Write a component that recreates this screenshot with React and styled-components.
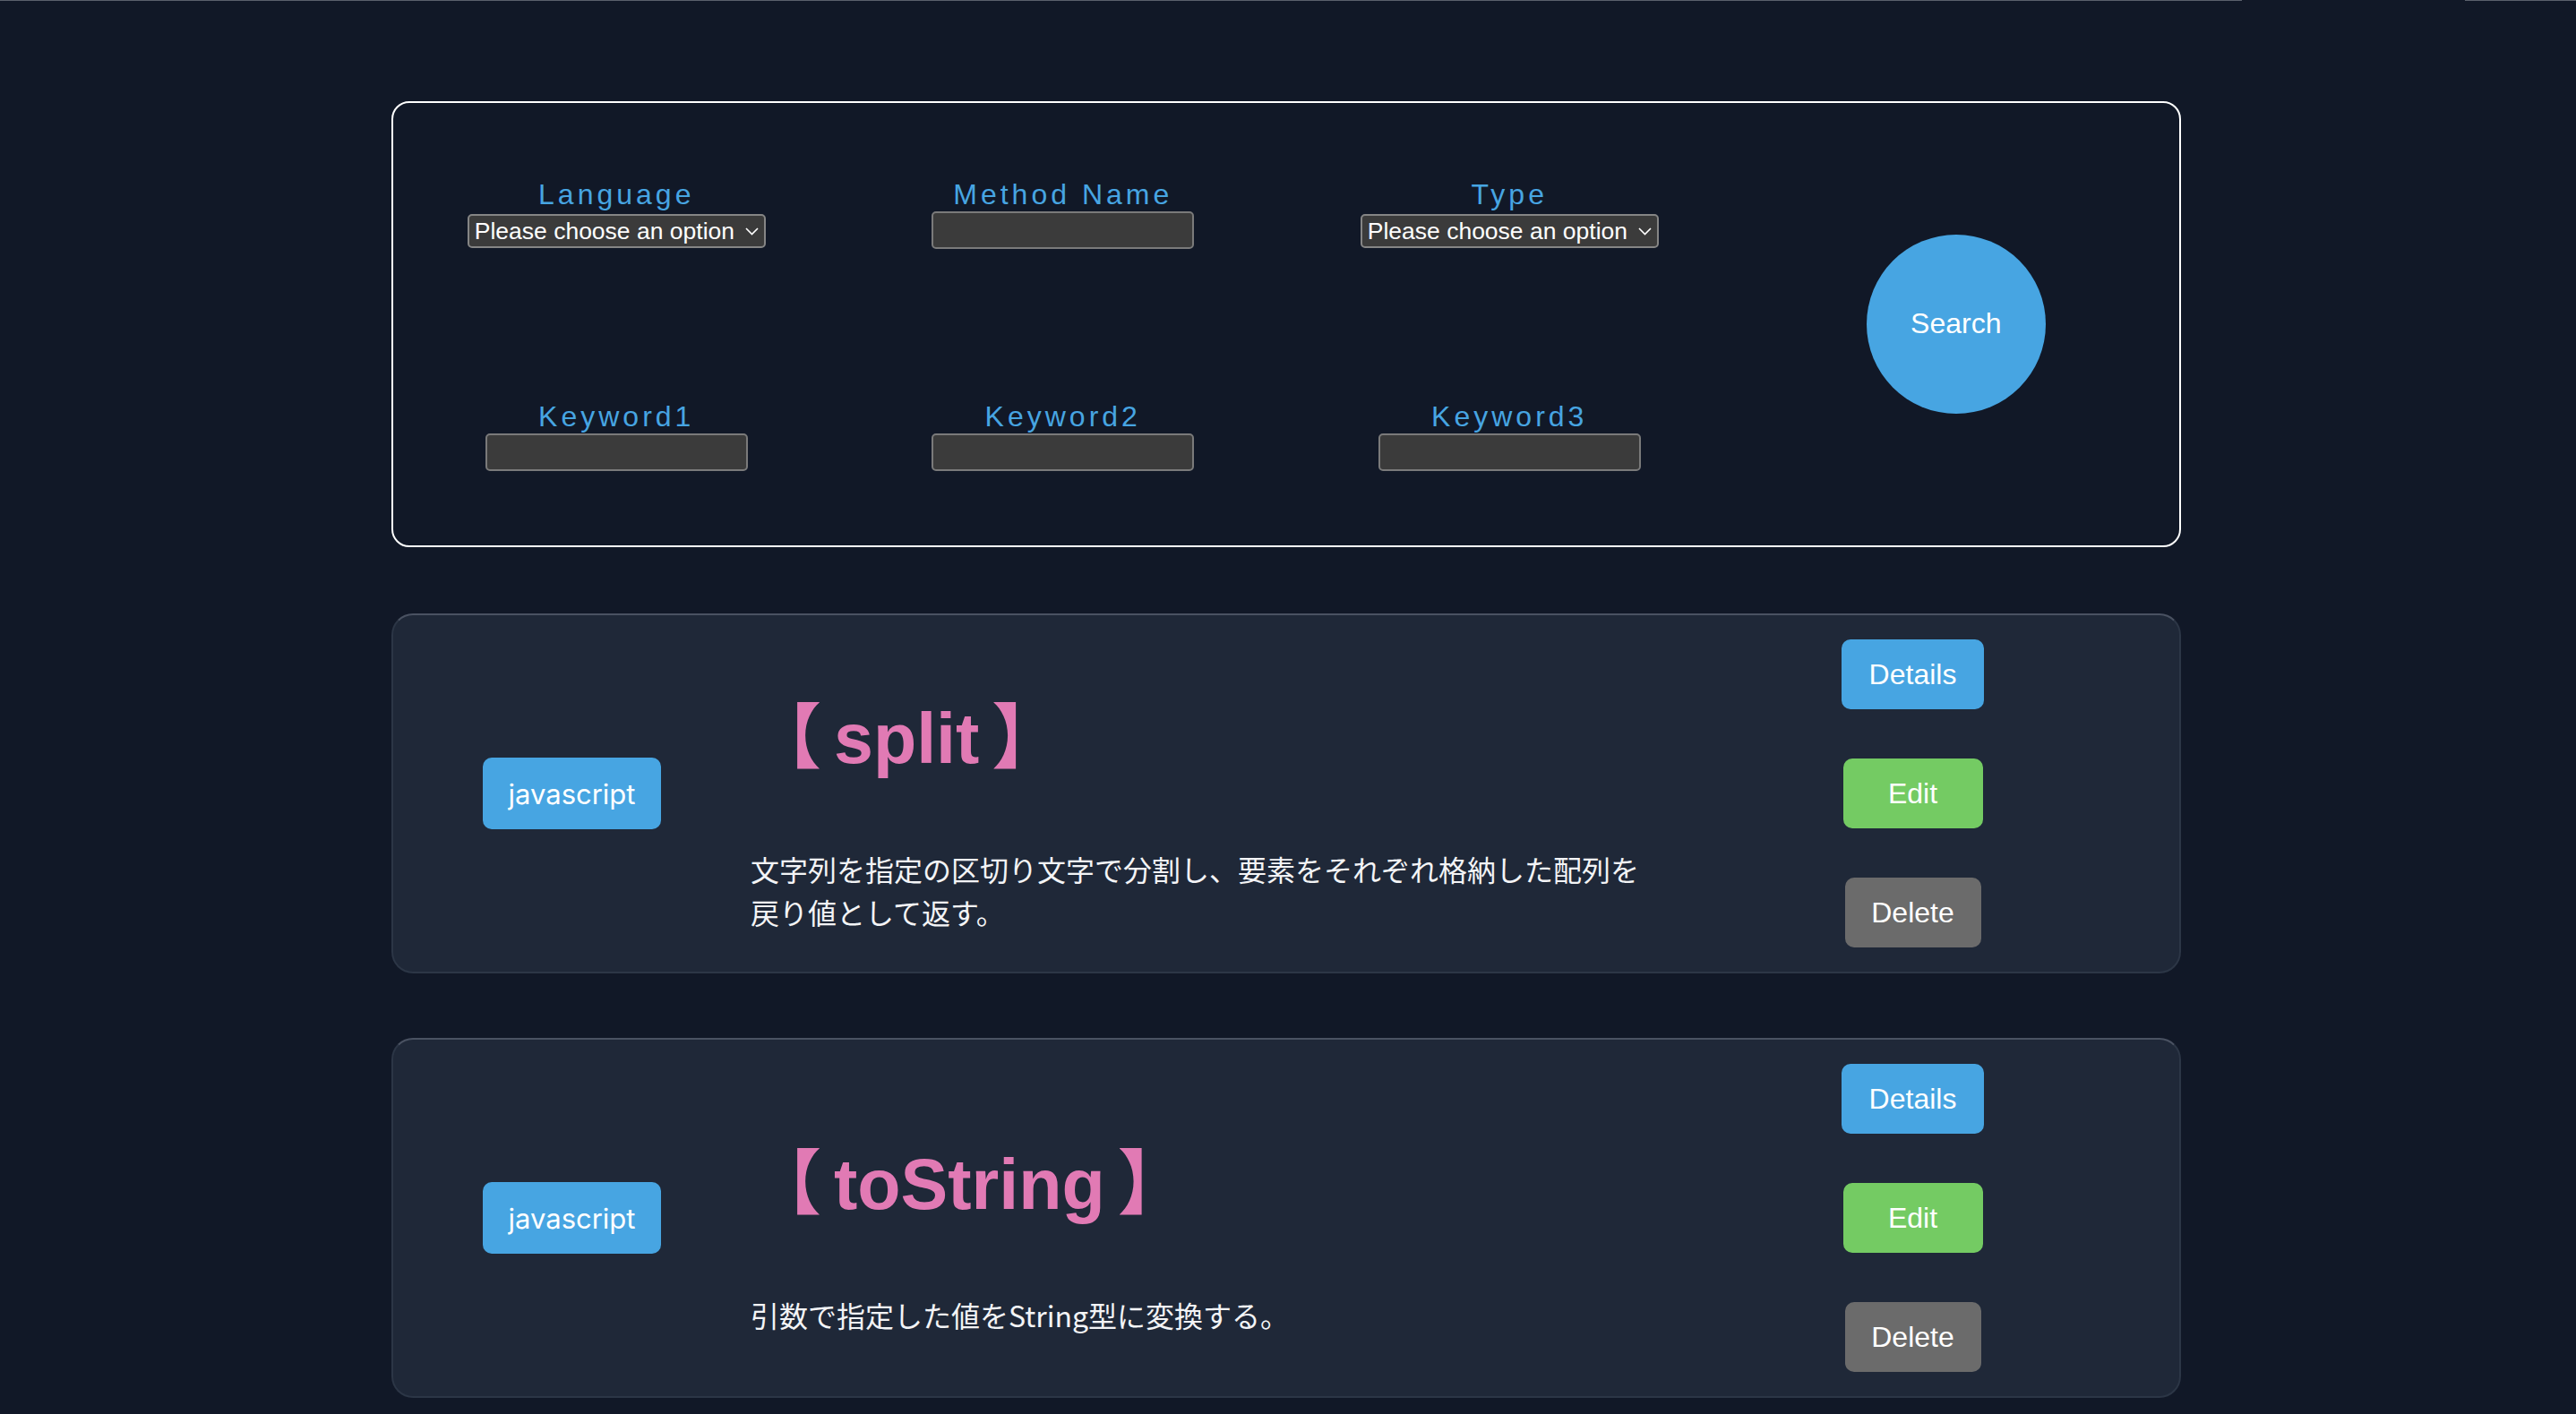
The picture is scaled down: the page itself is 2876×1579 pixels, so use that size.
import React from "react";
import styled, { createGlobalStyle } from "styled-components";

const GlobalStyle = createGlobalStyle`
  html, body {
    margin: 0;
    padding: 0;
    background: #111827;
  }
  body {
    font-family: "Liberation Sans", "Noto Sans CJK JP", sans-serif;
    color: #ffffff;
  }
`;

const TopRule = styled.div`
  display: flex;
  column-gap: 249px;
  height: 1px;
`;

const RuleSegment = styled.div`
  background: #5b606c;
  height: 1px;
  ${(p) => (p.$width ? `width: ${p.$width}px; flex: none;` : "flex: 1;")}
`;

const Page = styled.main`
  width: 1998px;
  margin: 112px 0 0 437px;
  display: flex;
  flex-direction: column;
`;

const SearchPanel = styled.form`
  box-sizing: border-box;
  height: 498px;
  border: 2px solid #ffffff;
  border-radius: 20px;
  padding-top: 86px;
  display: grid;
  grid-template-columns: repeat(4, 1fr);
  grid-template-rows: 248px 160px;
`;

const Field = styled.div`
  display: flex;
  flex-direction: column;
  align-items: center;
`;

const FieldLabel = styled.label`
  font-family: "Liberation Sans", sans-serif;
  font-size: 32px;
  line-height: 32px;
  letter-spacing: 4px;
  color: #47a5e2;
`;

const SelectWrap = styled.div`
  position: relative;
  margin-top: 6px;
  width: 333px;
  height: 38px;
`;

const Select = styled.select`
  appearance: none;
  -webkit-appearance: none;
  box-sizing: border-box;
  width: 100%;
  height: 100%;
  margin: 0;
  padding: 0 30px 0 6px;
  background: #3b3b3b;
  border: 2px solid #858585;
  border-radius: 5px;
  color: #ffffff;
  font-family: "Liberation Sans", sans-serif;
  font-size: 26.5px;
  line-height: 34px;
`;

const Chevron = styled.svg`
  position: absolute;
  right: 8px;
  top: 50%;
  margin-top: -4px;
  width: 15px;
  height: 9px;
  pointer-events: none;
`;

const TextInput = styled.input`
  box-sizing: border-box;
  margin: 3px 0 0;
  width: 293px;
  height: 42px;
  padding: 0 6px;
  background: #3b3b3b;
  border: 2px solid #7a7a7a;
  border-radius: 5px;
  color: #ffffff;
  font-size: 26px;
  outline: none;
`;

const SearchButton = styled.button`
  grid-column: 4;
  grid-row: 1 / span 2;
  justify-self: center;
  align-self: start;
  margin-top: 61px;
  width: 200px;
  height: 200px;
  border: none;
  border-radius: 50%;
  background: #47a5e2;
  color: #ffffff;
  font-family: "Liberation Sans", sans-serif;
  font-size: 32px;
  padding: 0 0 2px;
  cursor: pointer;
`;

const CardList = styled.section`
  margin-top: 74px;
  display: flex;
  flex-direction: column;
  gap: 72px;
`;

const Card = styled.article`
  box-sizing: border-box;
  height: 402px;
  background: #1f2838;
  border: 2px solid #2c3646;
  border-top-color: #4a5262;
  border-radius: 24px;
  display: grid;
  grid-template-columns: 399px 1000px 1fr;
  align-items: center;
`;

const LangBadge = styled.div`
  justify-self: center;
  width: 199px;
  height: 80px;
  border-radius: 10px;
  background: #47a5e2;
  color: #ffffff;
  display: flex;
  align-items: center;
  justify-content: center;
  font-family: "Inter", "Liberation Sans", sans-serif;
  font-size: 31px;
`;

const Content = styled.div`
  display: flex;
  flex-direction: column;
  padding-top: 46px;
`;

const MethodTitle = styled.h2`
  margin: 0 0 73px;
  font-family: "Liberation Sans", "Noto Sans CJK JP", sans-serif;
  font-weight: 700;
  font-size: 79px;
  line-height: 96px;
  word-spacing: -8px;
  color: #e17ab4;
  white-space: pre;
`;

const Description = styled.p`
  margin: 0;
  font-family: "Noto Sans CJK JP", sans-serif;
  font-size: 32px;
  line-height: 48px;
  color: #f3f4f6;
`;

const Actions = styled.div`
  display: flex;
  flex-direction: column;
  align-items: center;
  gap: 55px;
`;

const ActionButton = styled.button`
  width: ${(p) => p.$width}px;
  height: 78px;
  border: none;
  border-radius: 10px;
  background: ${(p) => p.$bg};
  color: #ffffff;
  font-family: "Liberation Sans", sans-serif;
  font-size: 32px;
  cursor: pointer;
`;

const ChevronIcon = () => (
  <Chevron viewBox="0 0 15 9">
    <path d="M1 1 L7.5 7.5 L14 1" fill="none" stroke="#ffffff" strokeWidth="1.6" />
  </Chevron>
);

const SelectField = ({ label }) => (
  <Field>
    <FieldLabel>{label}</FieldLabel>
    <SelectWrap>
      <Select defaultValue="">
        <option value="">Please choose an option</option>
      </Select>
      <ChevronIcon />
    </SelectWrap>
  </Field>
);

const InputField = ({ label }) => (
  <Field>
    <FieldLabel>{label}</FieldLabel>
    <TextInput type="text" />
  </Field>
);

const methods = [
  {
    lang: "javascript",
    name: "split",
    desc: "文字列を指定の区切り文字で分割し、要素をそれぞれ格納した配列を戻り値として返す。",
  },
  {
    lang: "javascript",
    name: "toString",
    desc: "引数で指定した値をString型に変換する。",
  },
];

export default function App() {
  return (
    <>
      <GlobalStyle />
      <TopRule>
        <RuleSegment />
        <RuleSegment $width={124} />
      </TopRule>
      <Page>
        <SearchPanel onSubmit={(e) => e.preventDefault()}>
          <SelectField label="Language" />
          <InputField label="Method Name" />
          <SelectField label="Type" />
          <SearchButton type="submit">Search</SearchButton>
          <InputField label="Keyword1" />
          <InputField label="Keyword2" />
          <InputField label="Keyword3" />
        </SearchPanel>
        <CardList>
          {methods.map((m) => (
            <Card key={m.name}>
              <LangBadge>{m.lang}</LangBadge>
              <Content>
                <MethodTitle>{`【 ${m.name} 】`}</MethodTitle>
                <Description>{m.desc}</Description>
              </Content>
              <Actions>
                <ActionButton $width={159} $bg="#47a5e2">Details</ActionButton>
                <ActionButton $width={156} $bg="#74cb63">Edit</ActionButton>
                <ActionButton $width={152} $bg="#6b6b6b">Delete</ActionButton>
              </Actions>
            </Card>
          ))}
        </CardList>
      </Page>
    </>
  );
}
